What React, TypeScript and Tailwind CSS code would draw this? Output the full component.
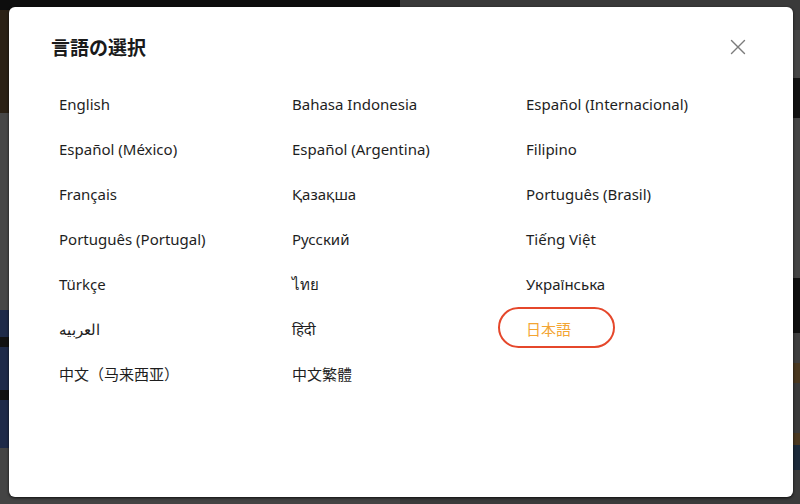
import { X } from 'lucide-react';

const languages = [
  'English', 'Bahasa Indonesia', 'Español (Internacional)',
  'Español (México)', 'Español (Argentina)', 'Filipino',
  'Français', 'Қазақша', 'Português (Brasil)',
  'Português (Portugal)', 'Русский', 'Tiếng Việt',
  'Türkçe', 'ไทย', 'Українська',
  'العربيه', 'हिंदी', '日本語',
  '中文（马来西亚）', '中文繁體',
];

const selected = '日本語';

export default function App() {
  return (
    <div className="relative w-[800px] h-[504px] overflow-hidden bg-[#3e3e3e] font-['Noto_Sans','Noto_Sans_CJK_JP',sans-serif]">
      {/* dimmed page underneath */}
      <div className="flex h-full">
        <div className="flex flex-col w-[400px]">
          <div className="h-[10px] bg-[#0e0e0e]" />
          <div className="h-[103px] bg-[#2b2115]" />
          <div className="h-[197px] bg-[#474747]" />
          <div className="h-[27px] bg-[#1e2a48]" />
          <div className="h-[10px] bg-[#111]" />
          <div className="h-[43px] bg-[#1e2a48]" />
          <div className="h-[10px] bg-[#111]" />
          <div className="h-[48px] bg-[#1e2a48]" />
          <div className="flex-1 bg-[#444]" />
        </div>
        <div className="flex flex-col w-[400px]">
          <div className="h-[30px] bg-[#3a3a3a]" />
          <div className="h-[48px] bg-[#454545]" />
          <div className="h-[40px] bg-[#111]" />
          <div className="h-[160px] bg-[#444]" />
          <div className="h-[55px] bg-[#0f0f0f]" />
          <div className="h-[30px] bg-[#3e3e3e]" />
          <div className="h-[20px] bg-[#4a3820]" />
          <div className="h-[50px] bg-[#3a3a3a]" />
          <div className="h-[12px] bg-[#4a3820]" />
          <div className="h-[25px] bg-[#1c2a3a]" />
          <div className="flex-1 bg-[#3b3b3b]" />
        </div>
      </div>

      {/* modal */}
      <div className="absolute left-[9px] top-[7px] w-[784px] h-[490px] bg-white rounded-[6px] shadow-[0_1px_3px_rgba(0,0,0,0.8)] px-[42px] pt-[28px]">
        <div className="flex items-center justify-between h-[24px]">
          <h2 className="text-[19px] leading-[24px] font-bold text-[#1a1a1a] font-['Noto_Sans_CJK_JP',sans-serif]">言語の選択</h2>
          <button className="text-[#7c7c7c]">
            <X className="h-[26px] w-[26px]" strokeWidth={1.3} />
          </button>
        </div>

        <div className="mt-[23px] grid grid-cols-[233px_234px_233px]">
          {languages.map((lang) => (
            <div key={lang} className="relative h-[45px] flex items-center pl-2">
              {lang === selected && (
                <span className="absolute left-[-20px] top-0 w-[117px] h-[41px] rounded-full border-[2.5px] border-[#e5472b]" />
              )}
              <span
                className={`text-[15px] ${
                  lang === selected ? 'text-[#f3a533] font-["Noto_Sans_CJK_JP",sans-serif]' : 'text-[#1e1e1e]'
                }`}
              >
                {lang}
              </span>
            </div>
          ))}
        </div>
      </div>
    </div>
  );
}
